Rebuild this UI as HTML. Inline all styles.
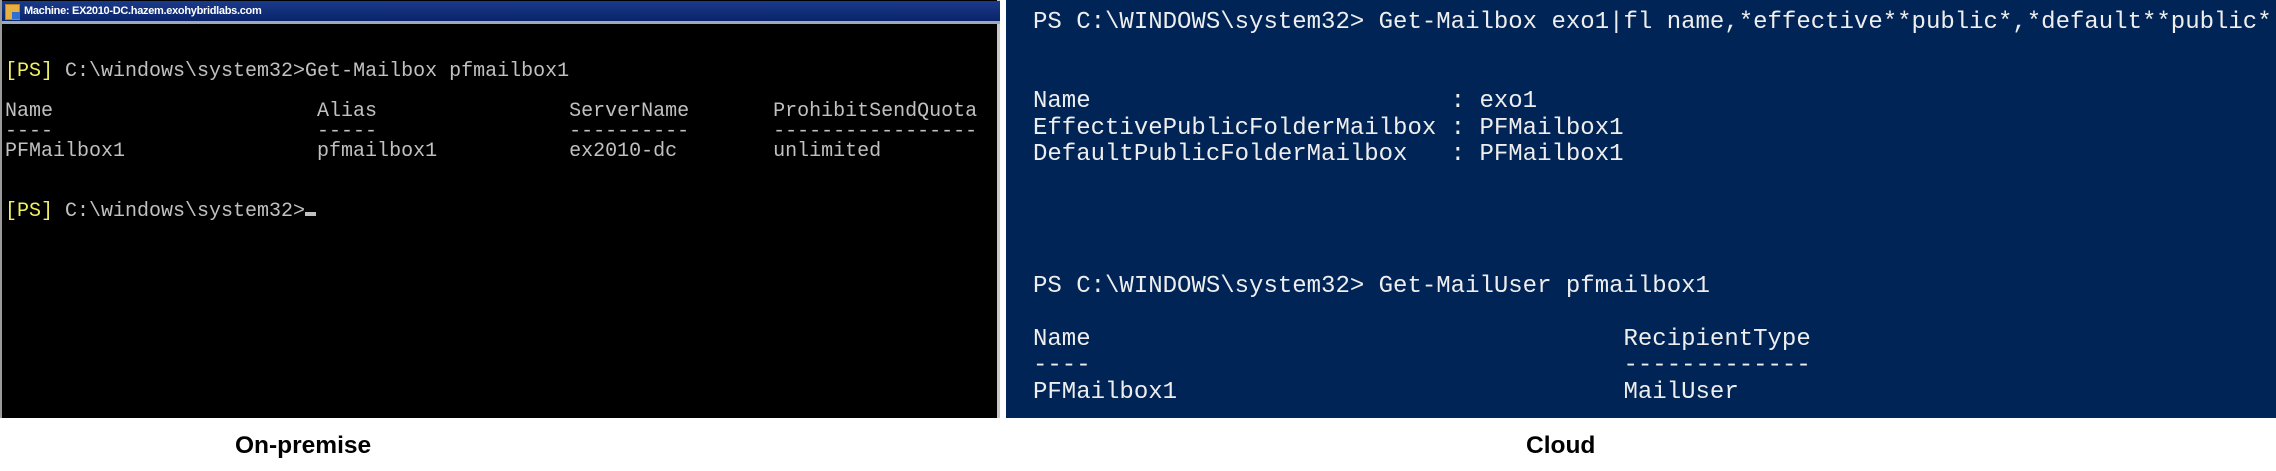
<!DOCTYPE html>
<html><head><style>
body{margin:0;width:2276px;height:471px;background:#fff;position:relative;overflow:hidden}
.l{position:absolute;left:0;top:0;width:1000px;height:418px;background:#000;box-sizing:border-box;border-left:2px solid #9a9a9a;border-right:3px solid #c8c8c8}
.tb{position:absolute;left:0;top:1px;width:998px;height:20px;background:linear-gradient(#1a3a8a,#0a246a);border-bottom:3px solid #a0a8b8;color:#fff;font:bold 11px "Liberation Sans",sans-serif;line-height:20px}
.tb span{position:absolute;left:22px;top:0;letter-spacing:-0.3px}
.ic{position:absolute;left:3px;top:3px;width:13px;height:14px;background:#e8b040;border:1px solid #c08020}
.ic i{position:absolute;left:6px;top:7px;width:8px;height:7px;background:#3070d0}
pre{margin:0;position:absolute;white-space:pre;font-family:"Liberation Mono",monospace}
.lt{left:3px;top:2px;font-size:20px;line-height:20px;color:#c0c0c0}
.y{color:#f0f060}
.cur{display:inline-block;width:11px;height:4px;background:#c0c0c0;vertical-align:baseline}
.r{position:absolute;left:1006px;top:0;width:1270px;height:418px;background:#012456;overflow:hidden}
.rt{left:27px;top:0;font-size:24px;line-height:26.4px;color:#eeeeee}
.lab{position:absolute;top:432px;font:bold 24.5px "Liberation Sans",sans-serif;color:#000}
</style></head><body>
<div class="l">
<pre class="lt">



<span class="y">[PS]</span> C:\windows\system32&gt;Get-Mailbox pfmailbox1

Name                      Alias                ServerName       ProhibitSendQuota
----                      -----                ----------       -----------------
PFMailbox1                pfmailbox1           ex2010-dc        unlimited


<span class="y">[PS]</span> C:\windows\system32&gt;<span class="cur"></span></pre>
<div class="tb"><div class="ic"><i></i></div><span>Machine: EX2010-DC.hazem.exohybridlabs.com</span></div>
</div>
<div class="r">
<pre class="rt" style="top:10px">PS C:\WINDOWS\system32&gt; Get-Mailbox exo1|fl name,*effective**public*,*default**public*


Name                         : exo1
EffectivePublicFolderMailbox : PFMailbox1
DefaultPublicFolderMailbox   : PFMailbox1




PS C:\WINDOWS\system32&gt; Get-MailUser pfmailbox1

Name                                     RecipientType
----                                     -------------
PFMailbox1                               MailUser</pre>
</div>
<div class="lab" style="left:235px">On-premise</div>
<div class="lab" style="left:1526px">Cloud</div>
</body></html>
